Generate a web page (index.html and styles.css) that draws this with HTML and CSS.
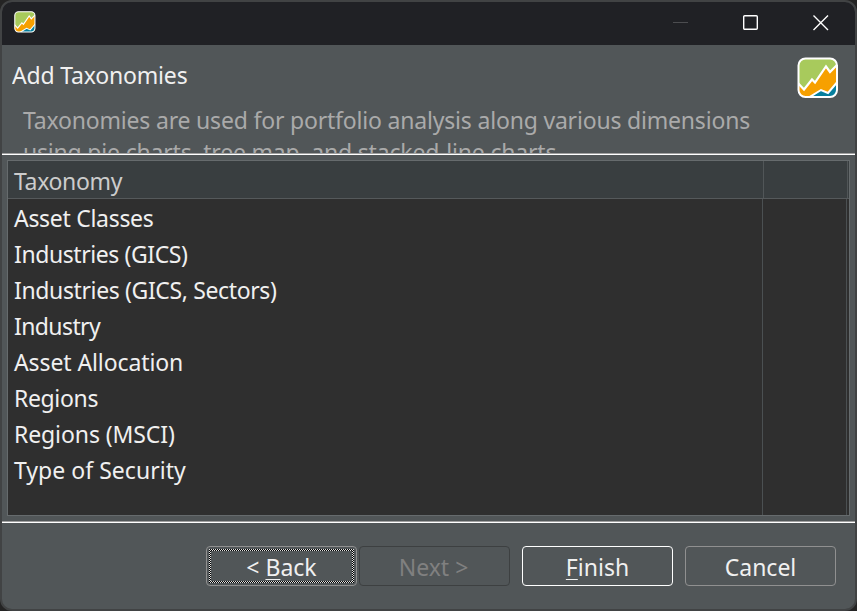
FILE: index.html
```html
<!DOCTYPE html>
<html lang="en">
<head>
<meta charset="utf-8">
<title>Add Taxonomies</title>
<link rel="stylesheet" href="styles.css">
</head>
<body>
<svg class="defs" width="0" height="0">
  <symbol id="logo" viewBox="0 0 42 42">
    <clipPath id="tile"><rect x="1.5" y="1.5" width="38.500" height="38.500" rx="7"/></clipPath>
    <g clip-path="url(#tile)">
      <rect width="42" height="42" fill="#a8ca5c"/>
      <path d="M0 25 L7 33 L15 22 L18 25.500 L29 9 L33 15 L42 6 V42 H0Z" fill="#f7a000"/>
      <path d="M11 42 L24 33 L31 36 L42 23 V42Z" fill="#067f9e"/>
      <path d="M0 25 L7 32.500 L15 22.500 L18 25.500 L29 9.500 L33 15 L42 6" fill="none" stroke="#fff" stroke-width="2.200"/>
      <path d="M11 41 L24 33 L31 36 L42 23" fill="none" stroke="#fff" stroke-width="2"/>
    </g>
    <rect x="1.500" y="1.500" width="38.500" height="38.500" rx="7" fill="none" stroke="#fff" stroke-width="2"/>
  </symbol>
</svg>
<div class="window">
  <header class="titlebar">
    <svg class="app-icon"><use href="#logo"/></svg>
    <div class="controls">
      <svg width="16" height="16"><path d="M0 7.500H15" stroke="#4c4d50"/></svg>
      <svg width="16" height="16"><rect x=".7" y=".7" width="13.600" height="13.600" rx="1" fill="none" stroke="#fff" stroke-width="1.400"/></svg>
      <svg width="16" height="16"><path d="M.5 .5L15 15M15 .5L.5 15" stroke="#fff" stroke-width="1.400"/></svg>
    </div>
  </header>
  <section class="banner">
    <div class="intro">
      <h1><span class="t-title">Add Taxonomies</span></h1>
      <p><span class="t-desc">Taxonomies are used for portfolio analysis along various dimensions</span><br><span class="t-desc">using pie charts, tree map, and stacked-line charts.</span></p>
    </div>
    <svg class="banner-icon"><use href="#logo"/></svg>
  </section>
  <main>
    <div class="table">
      <div class="head"><div class="col-name"><span class="t-head">Taxonomy</span></div><div class="col-rest"></div></div>
      <div class="body">
        <ul>
          <li><span class="t-classes">Asset Classes</span></li>
          <li><span class="t-gics">Industries (GICS)</span></li>
          <li><span class="t-sectors">Industries (GICS, Sectors)</span></li>
          <li><span class="t-industry">Industry</span></li>
          <li><span class="t-alloc">Asset Allocation</span></li>
          <li><span class="t-regions">Regions</span></li>
          <li><span class="t-msci">Regions (MSCI)</span></li>
          <li><span class="t-security">Type of Security</span></li>
        </ul>
        <div class="col-rest"></div>
      </div>
    </div>
  </main>
  <footer>
    <button class="back"><span>&lt; <u>B</u>ack</span></button>
    <button class="next" disabled><span>Next &gt;</span></button>
    <button class="finish"><span><u>F</u>inish</span></button>
    <button class="cancel"><span>Cancel</span></button>
  </footer>
</div>
</body>
</html>
```
FILE: styles.css
```css
* { box-sizing: border-box; }
body { margin: 0; width: 857px; height: 611px; overflow: hidden; background: #242424; font: 23px/32px "Noto Sans", sans-serif; color: #f0f0f0; }
.defs { position: absolute; }
.window { display: flex; flex-direction: column; width: 857px; height: 611px; border: 2px solid #414344; border-radius: 12px; background: #515658; overflow: hidden; }
.titlebar { display: flex; justify-content: space-between; height: 43px; flex: none; background: #202125; padding: 9px 26px 0 12px; }
.app-icon { width: 22px; height: 22px; }
.controls { display: flex; gap: 54px; padding-top: 4px; }
.controls svg { display: block; }
.banner { display: flex; justify-content: space-between; height: 110px; flex: none; padding: 12px 16px 0 10px; overflow: hidden; box-shadow: inset 0 -1px #fff, inset 0 -2px #a0a0a0; }
.intro { height: 96px; overflow: hidden; white-space: nowrap; }
h1 { margin: 0; font-size: 23px; font-weight: 400; line-height: 36px; }
p { margin: 11px 0 0 11px; color: #aaa; }
.banner-icon { width: 42px; height: 42px; }
main { height: 366px; flex: none; padding: 5px; }
.table { height: 356px; border: 1px solid #666b6d; display: flex; flex-direction: column; }
.head { display: flex; height: 38px; background: #393e40; border-bottom: 1px solid #55595b; color: #ccc; }
.head .col-name { width: 756px; border-right: 1px solid #515658; padding: 4px 0 0 6px; }
.head .col-rest { width: 84px; border-right: 1px solid #515658; }
.body { display: flex; flex: 1; background: #2f2f2f; }
ul { width: 755px; margin: 0; padding: 3px 0 0 6px; list-style: none; border-right: 1px solid #4b5052; }
li { height: 36px; white-space: nowrap; }
.body .col-rest { width: 84px; border-right: 1px solid #4b5052; }
.t-title { letter-spacing: -.18px; }
.t-desc { letter-spacing: -.19px; }
.t-head { letter-spacing: -.35px; }
.t-classes { letter-spacing: -.3px; }
.t-gics { letter-spacing: -.42px; }
.t-sectors { letter-spacing: -.37px; }
.t-industry { letter-spacing: -.6px; }
.t-alloc { letter-spacing: -.1px; }
.t-regions { letter-spacing: -.35px; }
.t-msci { letter-spacing: -.1px; }
.t-security { letter-spacing: .03px; }
footer { display: flex; flex: 1; padding: 25px 0 0 204px; box-shadow: inset 0 1px #a0a0a0, inset 0 2px #fff; }
button { display: flex; justify-content: center; width: 151px; height: 40px; padding: 4px 0 0; margin: 0; font: inherit; color: #f0f0f0; background: transparent; border: 1px solid #909090; border-radius: 4px; position: relative; white-space: nowrap; }
u { text-underline-offset: 3px; text-decoration-thickness: 1px; }
.back::after {
  content: ""; position: absolute; inset: 2px; padding: 2px;
  background: repeating-conic-gradient(#000 0 25%, #e0e0e0 0 50%) 0 0 / 2px 2px;
  mask: linear-gradient(#000 0 0) content-box exclude, linear-gradient(#000 0 0);
}
.next { margin-left: 2px; padding-right: 2px; color: #808080; border-color: #3d4041; }
.finish { margin-left: 12px; border-color: #fff; }
.cancel { margin-left: 12px; }
```
